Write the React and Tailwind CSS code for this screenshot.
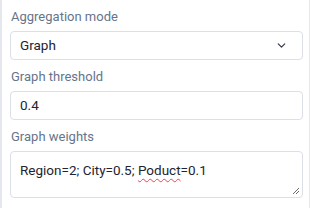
import React from 'react';
import { ChevronDown } from 'lucide-react';

export default function App() {
  return (
    <div className="w-[314px] h-[208px] bg-white overflow-hidden" style={{ fontFamily: 'Roboto, "Noto Sans", sans-serif' }}>
      <div className="w-[310px] h-full border-l-2 border-r border-[#e4e8ee] pl-[8px] pr-[6px] pt-[8px] flex flex-col gap-2">
        <div className="flex flex-col">
          <label className="text-[13px] leading-[18px] text-[#677489] pl-px mb-[5px]">Aggregation mode</label>
          <div className="h-[29px] border border-[#dcdfe5] rounded-[4px] flex items-center justify-between pl-[9px] pr-[14px]">
            <span className="text-[13.5px] text-[#1e2430]">Graph</span>
            <ChevronDown size={13} strokeWidth={2.25} className="text-[#333a46]" />
          </div>
        </div>
        <div className="flex flex-col">
          <label className="text-[13px] leading-[18px] text-[#677489] pl-px mb-[5px]">Graph threshold</label>
          <div className="h-[29px] border border-[#dcdfe5] rounded-[4px] flex items-center pl-[9px]">
            <span className="text-[13.5px] text-[#1e2430]">0.4</span>
          </div>
        </div>
        <div className="flex flex-col">
          <label className="text-[13px] leading-[18px] text-[#677489] pl-px mb-[5px]">Graph weights</label>
          <div className="relative h-[47px] border border-[#dcdfe5] rounded-[4px] pl-[9px] pt-[6px]">
            <span className="text-[13.5px] leading-[18px] text-[#1e2430]">
              Region=2; City=0.5; <span className="underline decoration-wavy decoration-[#e5484d] decoration-1 underline-offset-[3px]">Poduct</span>=0.1
            </span>
            <svg className="absolute right-[2px] bottom-[2px]" width="8" height="8" viewBox="0 0 8 8">
              <path d="M7 1 L1 7 M7 4 L4 7" stroke="#6b6b6b" strokeWidth="1" />
            </svg>
          </div>
        </div>
      </div>
    </div>
  );
}
